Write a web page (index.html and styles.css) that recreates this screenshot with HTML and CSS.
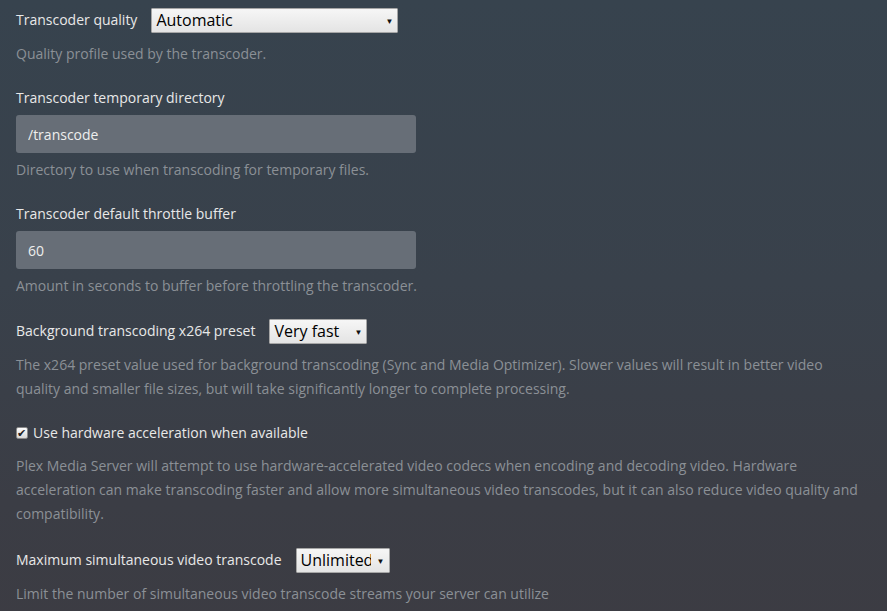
FILE: index.html
```html
<!DOCTYPE html>
<html lang="en">
<head>
  <meta charset="UTF-8">
  <title>Transcoder Settings</title>
  <link rel="stylesheet" href="styles.css">
</head>
<body>
  <div class="settings">
    <div class="setting">
      <div class="inline-row">
        <label for="quality">Transcoder quality</label>
        <span class="select-wrap">
          <select id="quality" class="w-quality">
            <option selected>Automatic</option>
            <option>Prefer higher speed encoding</option>
            <option>Prefer higher quality encoding</option>
            <option>Make my CPU hurt</option>
          </select>
        </span>
      </div>
      <p class="help help-row">Quality profile used by the transcoder.</p>
    </div>

    <div class="setting">
      <label for="tempDir" class="block-label">Transcoder temporary directory</label>
      <input type="text" id="tempDir" value="/transcode">
      <p class="help">Directory to use when transcoding for temporary files.</p>
    </div>

    <div class="setting setting-tight">
      <label for="throttle" class="block-label">Transcoder default throttle buffer</label>
      <input type="text" id="throttle" value="60">
      <p class="help">Amount in seconds to buffer before throttling the transcoder.</p>
    </div>

    <div class="setting">
      <div class="inline-row">
        <label for="preset">Background transcoding x264 preset</label>
        <span class="select-wrap">
          <select id="preset" class="w-preset">
            <option>Ultra fast</option>
            <option>Super fast</option>
            <option selected>Very fast</option>
            <option>Faster</option>
            <option>Fast</option>
            <option>Medium</option>
            <option>Slow</option>
          </select>
        </span>
      </div>
      <p class="help help-row">The x264 preset value used for background transcoding (Sync and Media Optimizer). Slower values will result in better video quality and smaller file sizes, but will take significantly longer to complete processing.</p>
    </div>

    <div class="setting">
      <label class="check-row">
        <input type="checkbox" class="check" checked>
        <span>Use hardware acceleration when available</span>
      </label>
      <p class="help help-check">Plex Media Server will attempt to use hardware-accelerated video codecs when encoding and decoding video. Hardware acceleration can make transcoding faster and allow more simultaneous video transcodes, but it can also reduce video quality and compatibility.</p>
    </div>

    <div class="setting">
      <div class="inline-row">
        <label for="maxTranscodes">Maximum simultaneous video transcode</label>
        <span class="select-wrap">
          <select id="maxTranscodes" class="w-max">
            <option selected>Unlimited</option>
            <option>1</option>
            <option>2</option>
            <option>3</option>
            <option>4</option>
          </select>
        </span>
      </div>
      <p class="help help-row">Limit the number of simultaneous video transcode streams your server can utilize</p>
    </div>
  </div>
</body>
</html>
```

FILE: styles.css
```css
html { background: #3a3e46; }
body {
  margin: 0;
  min-height: 611px;
  font-family: "Open Sans", "Liberation Sans", sans-serif;
  font-size: 14px;
  color: #e8e8e8;
  background: linear-gradient(180deg, #37434e 0%, #39414b 45%, #3b3d45 80%, #3c3c43 100%);
}
.settings { padding: 8px 20px 0 16px; }
.setting { margin-bottom: 22px; }
.setting-tight { margin-bottom: 21px; }

label { line-height: 20px; }
.block-label { display: block; margin-bottom: 7px; }

.inline-row { display: flex; align-items: center; gap: 14px; height: 24px; }

.select-wrap { position: relative; display: inline-block; }
.select-wrap::after {
  content: "\25BC";
  position: absolute;
  right: 5px;
  top: 8px;
  font-size: 8px;
  line-height: 10px;
  color: #111;
  pointer-events: none;
}
select {
  appearance: none;
  -webkit-appearance: none;
  display: block;
  height: 25px;
  margin: 0;
  padding: 0 18px 0 4px;
  font-family: "Open Sans", "Liberation Sans", sans-serif;
  font-size: 16px;
  color: #000;
  background: linear-gradient(180deg, #f6f6f6, #e4e4e4);
  border: 1px solid #a6a6a6;
  border-radius: 1px;
}
.w-quality { width: 247px; }
.w-preset { width: 98px; }
.w-max { width: 94px; }

input[type="text"] {
  display: block;
  box-sizing: border-box;
  width: 400px;
  height: 38px;
  margin: 0;
  padding: 0 12px;
  font-family: "Open Sans", "Liberation Sans", sans-serif;
  font-size: 14px;
  color: #eeeeee;
  background: #676e77;
  border: none;
  border-radius: 3px;
}

.check-row { display: flex; align-items: center; gap: 5px; }
.check {
  appearance: none;
  -webkit-appearance: none;
  position: relative;
  width: 12px;
  height: 12px;
  margin: 0;
  border: 1px solid #8a8a8a;
  border-radius: 2px;
  background: linear-gradient(180deg, #fdfdfd, #d8d8d8);
}
.check:checked::after {
  content: "\2714";
  position: absolute;
  left: 0;
  top: -3px;
  font-size: 11px;
  line-height: 16px;
  color: #222;
}

.help {
  margin: 5px 0 0;
  line-height: 24px;
  color: #8b9096;
}
.help-row { margin-top: 10px; }
.help-check { margin-top: 11px; }
```
